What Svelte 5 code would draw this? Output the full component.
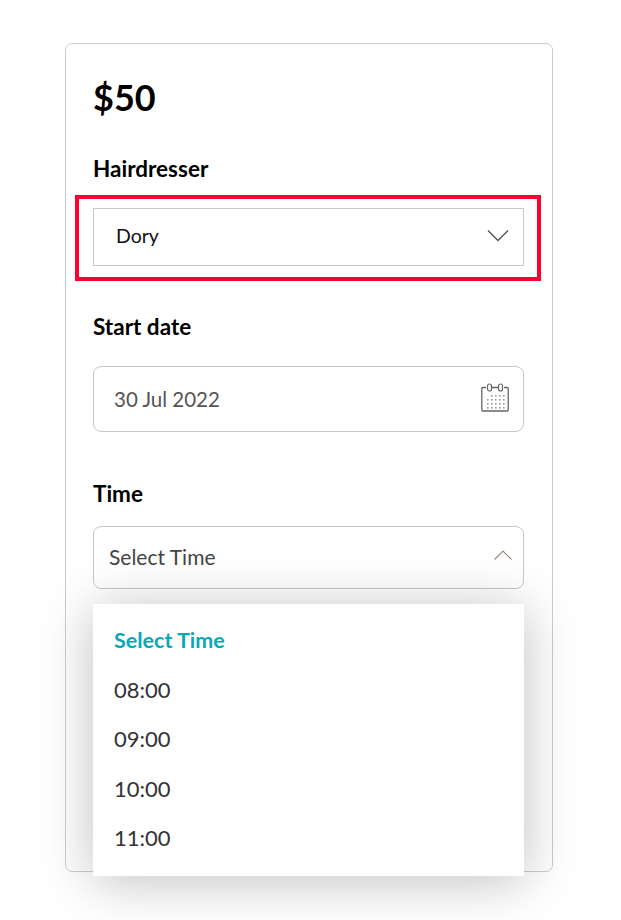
<script>
  const times = ['08:00', '09:00', '10:00', '11:00'];
</script>

<main class="page">
  <section class="card">
    <h1 class="price">$50</h1>

    <h2 class="label first">Hairdresser</h2>
    <div class="hair-wrap">
      <div class="select-square">
        <span>Dory</span>
        <svg class="chev" width="22" height="13" viewBox="0 0 22 13" aria-hidden="true">
          <path d="M1 1.5 L11 11.5 L21 1.5" fill="none" stroke="#555" stroke-width="1.4" />
        </svg>
      </div>
      <div class="highlight"></div>
    </div>

    <h2 class="label date-label">Start date</h2>
    <div class="date-input">
      <span>30 Jul 2022</span>
      <svg class="cal" width="30" height="30" viewBox="0 0 30 30" aria-hidden="true">
        <path d="M6 4.5 H2.8 a1 1 0 0 0 -1 1 V27 a1 1 0 0 0 1 1 H27.2 a1 1 0 0 0 1 -1 V5.5 a1 1 0 0 0 -1 -1 H24 M12 4.5 H18" fill="none" stroke="#666" stroke-width="1.3" />
        <rect x="7.5" y="1" width="4" height="7" rx="2" fill="#fff" stroke="#666" stroke-width="1.2" />
        <rect x="18.5" y="1" width="4" height="7" rx="2" fill="#fff" stroke="#666" stroke-width="1.2" />
        <g fill="#999">
          {#each [12, 16, 20, 24] as y}
            {#each [7, 11, 15, 19, 23] as x}
              {#if !(y === 12 && x === 7)}
                <rect x={x} y={y} width="1.6" height="1.6" />
              {/if}
            {/each}
          {/each}
        </g>
      </svg>
    </div>

    <h2 class="label time-label">Time</h2>
    <div class="time-wrap">
      <div class="time-select">
        <span>Select Time</span>
        <svg class="up" width="18" height="11" viewBox="0 0 18 11" aria-hidden="true">
          <path d="M0.5 9.5 L9 1 L17.5 9.5" fill="none" stroke="#9a8a84" stroke-width="1.1" />
        </svg>
      </div>
      <ul class="menu">
        <li class="active">Select Time</li>
        {#each times as t}
          <li>{t}</li>
        {/each}
      </ul>
    </div>
  </section>
</main>

<style>
  :global(body) {
    margin: 0;
    background: #fff;
  }
  .page {
    height: 920px;
    padding: 43px 68px 0 65px;
    box-sizing: border-box;
    overflow: hidden;
    font-family: "Lato", "Open Sans", sans-serif;
  }
  .card {
    box-sizing: border-box;
    height: 829px;
    border: 1px solid #ccc;
    border-radius: 7px;
    padding: 0 28px 0 27px;
    color: #000;
  }
  .price {
    margin: 30px 0 0;
    font-size: 36px;
    line-height: 46px;
    font-weight: 700;
    font-family: "Lato", sans-serif;
  }
  .label {
    margin: 0;
    font-size: 22.5px;
    line-height: 30px;
    font-weight: 700;
  }
  .first { margin-top: 34px; }
  .hair-wrap {
    position: relative;
    margin-top: 24px;
  }
  .select-square {
    box-sizing: border-box;
    height: 58px;
    border: 1px solid #c8c8c8;
    padding: 0 14px 4px 22px;
    display: flex;
    align-items: center;
    justify-content: space-between;
    font-size: 19.5px;
    color: #111;
  }
  .highlight {
    position: absolute;
    left: -18px;
    right: -17px;
    top: -13px;
    bottom: -15px;
    border: 4px solid #ff0033;
  }
  .date-label { margin-top: 46px; }
  .date-input {
    box-sizing: border-box;
    margin-top: 24px;
    height: 66px;
    border: 1px solid #c8c8c8;
    border-radius: 8px;
    padding: 0 13px 0 20px;
    display: flex;
    align-items: center;
    justify-content: space-between;
    font-size: 20.5px;
    color: #555;
  }
  .cal { margin-bottom: 2px; }
  .time-label { margin-top: 47px; }
  .time-wrap {
    position: relative;
    margin-top: 17px;
  }
  .time-select {
    box-sizing: border-box;
    height: 63px;
    border: 1px solid #c8c8c8;
    border-radius: 8px;
    padding: 0 11px 2px 15px;
    display: flex;
    align-items: center;
    justify-content: space-between;
    font-size: 21px;
    color: #444;
  }
  .up { margin-bottom: 2px; }
  .menu {
    position: absolute;
    left: 0;
    right: 0;
    top: 78px;
    height: 272px;
    box-sizing: border-box;
    margin: 0;
    padding: 12px 0 0 21px;
    list-style: none;
    background: #fff;
    box-shadow: 0 5px 50px rgba(0, 0, 0, 0.25);
    font-size: 22px;
    color: #333;
  }
  .menu li {
    height: 49.5px;
    line-height: 49.5px;
  }
  .menu .active {
    height: 48.5px;
    color: #0aa8b5;
    font-size: 21.5px;
    font-weight: 700;
  }
</style>
